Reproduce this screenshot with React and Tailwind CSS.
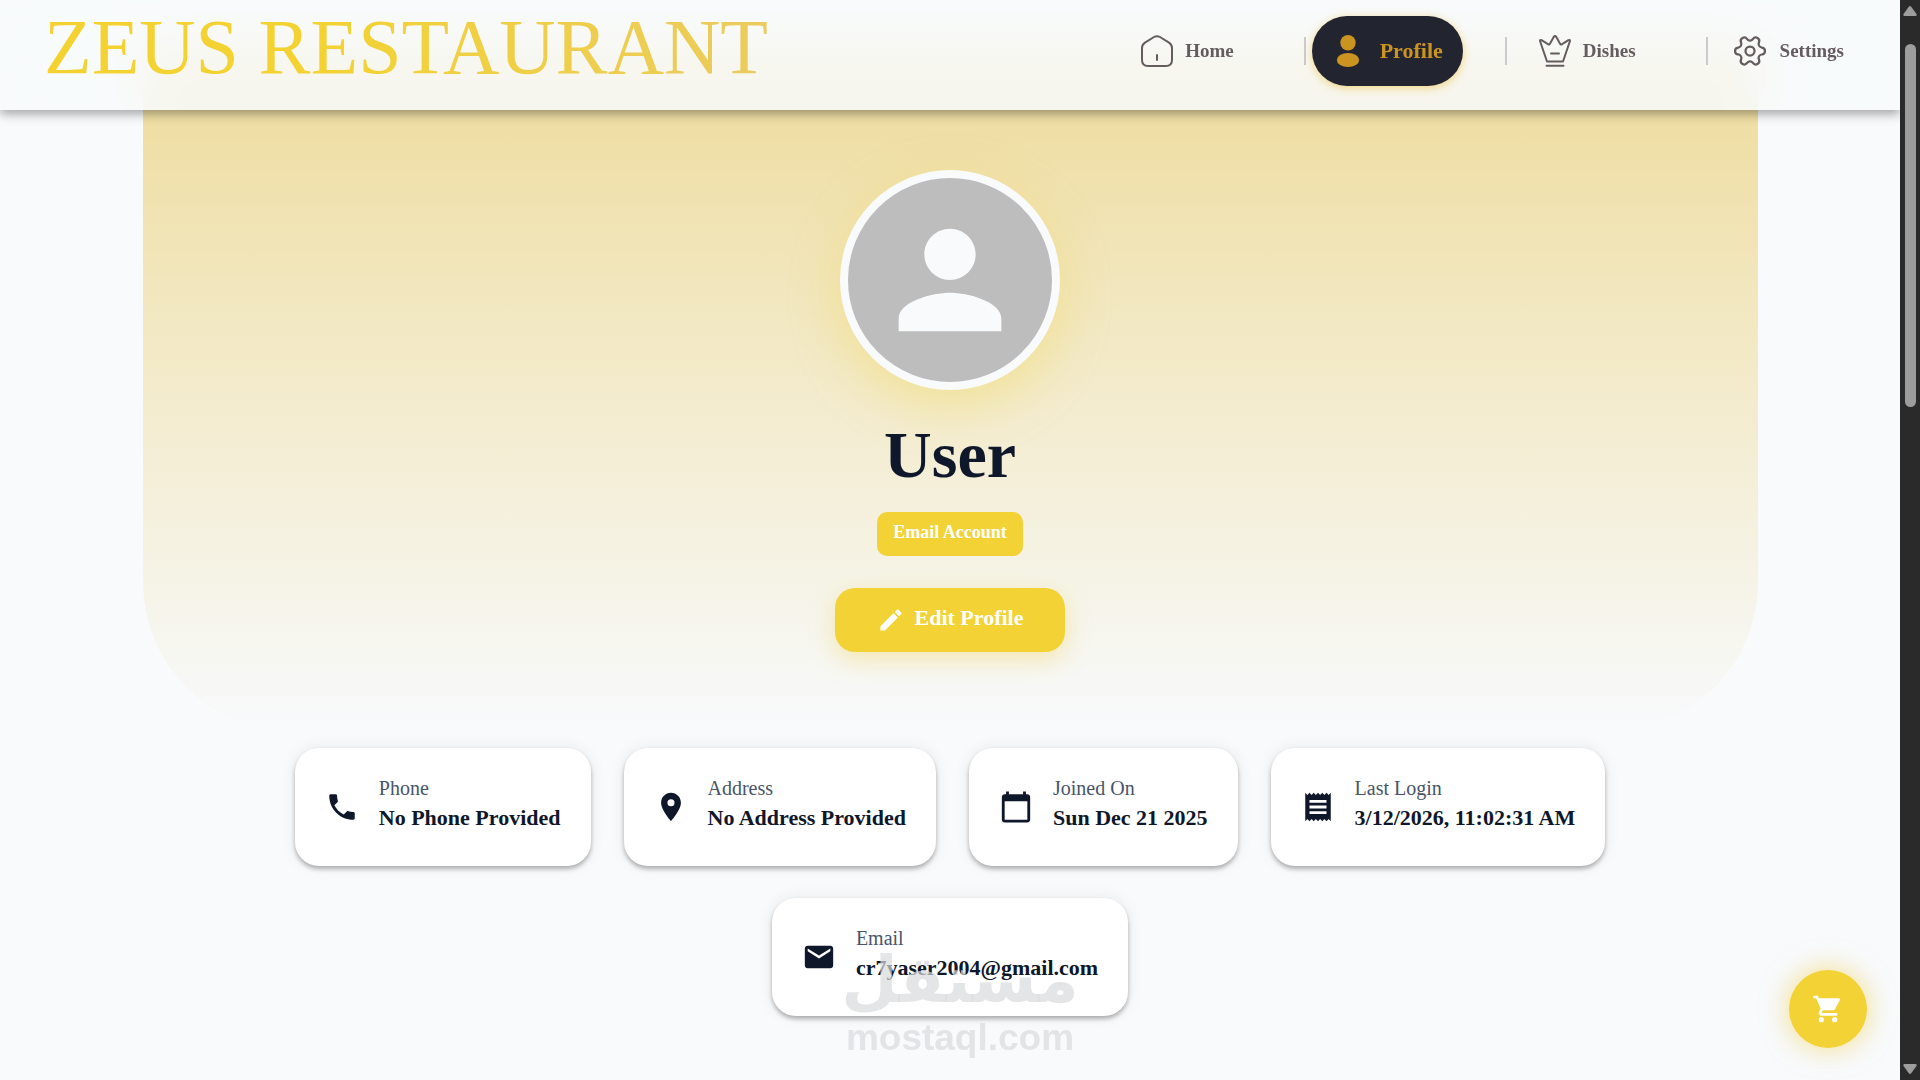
import React, { useEffect } from "react";
import {
    MdCalendarToday,
    MdEdit,
    MdEmail,
    MdLocationOn,
    MdPerson,
    MdPhone,
    MdReceipt,
    MdShoppingCart,
} from "react-icons/md";
import { Settings } from "lucide-react";

const user = {
    name: "User",
    account: "Email Account",
    details: [
        { label: "Phone", value: "No Phone Provided", icon: MdPhone },
        { label: "Address", value: "No Address Provided", icon: MdLocationOn },
        { label: "Joined On", value: "Sun Dec 21 2025", icon: MdCalendarToday },
        { label: "Last Login", value: "3/12/2026, 11:02:31 AM", icon: MdReceipt },
        { label: "Email", value: "cr7yaser2004@gmail.com", icon: MdEmail },
    ],
};

const HomeIcon = () => (
    <svg className="size-8" viewBox="0 0 32 32" fill="none" stroke="currentColor" strokeWidth="2" strokeLinecap="round" strokeLinejoin="round">
        <path d="M13 2 4 7.6Q1 9.600 1 13V25q0 6 6 6H25q6 0 6-6V13q0-3.400-3-5.400L19 2q-3-1.700-6 0Z" />
        <path d="M16 20v5" />
    </svg>
);

const UserIcon = () => (
    <svg className="size-8" viewBox="0 0 32 32" fill="currentColor">
        <circle cx="16" cy="7.700" r="7.700" />
        <ellipse cx="16" cy="25" rx="11.200" ry="7" />
    </svg>
);

const CrownIcon = () => (
    <svg className="size-8" viewBox="0 0 32 32" fill="none" stroke="currentColor" strokeWidth="2" strokeLinecap="round" strokeLinejoin="round">
        <path d="M2.600 5.200 9.300 9.400q1 .6 1.500-.5L14.700 2Q16-.2 17.300 2l3.900 6.900q.5 1.100 1.500.5l6.700-4.200q1.900-.8 1.500 1.100L24 26.500H8L1.100 6.300Q.7 4.400 2.600 5.200Z" />
        <path d="M12 18.500h8M7.500 30.800h17" />
    </svg>
);

const Divider = () => <span className="h-7 w-0.5 bg-[#c9cbcd]" />;

const NavLink = ({ href, icon, children }) => (
    <a href={href} className="flex items-center gap-3 text-[19px] font-bold text-[#655c60]">
        {icon}
        {children}
    </a>
);

const Header = () => (
    <header className="sticky top-0 z-20 flex h-[110px] items-center justify-between bg-[#f8fafc]/85 pr-14 pl-11 shadow-[0_4px_10px_rgba(0,0,0,0.35)] backdrop-blur-xl">
        <a href="/" className="bg-linear-to-r from-[#f3d232] from-40% to-[#ebcb5c] bg-clip-text pb-4 text-[78px] leading-[80px] text-transparent">
            ZEUS RESTAURANT
        </a>
        <nav className="flex items-center pb-2">
            <NavLink href="/home" icon={<HomeIcon />}>Home</NavLink>
            <div className="ml-[70px] flex items-center gap-1.5">
                <Divider />
                <a
                    href="/profile"
                    aria-current="page"
                    className="flex h-[70px] items-center gap-4 rounded-full bg-[#222530] px-5 text-[22px] font-bold text-[#cb9420] shadow-[0_2px_10px_rgba(235,190,60,0.6)]"
                >
                    <UserIcon />
                    <span className="pb-0.5">Profile</span>
                </a>
            </div>
            <div className="ml-[42px] flex items-center gap-8">
                <Divider />
                <NavLink href="/dishes" icon={<CrownIcon />}>Dishes</NavLink>
            </div>
            <div className="ml-[70px] flex items-center gap-6">
                <Divider />
                <NavLink href="/settings" icon={<Settings className="size-9 rotate-90" strokeWidth={1.5} />}>Settings</NavLink>
            </div>
        </nav>
    </header>
);

const Hero = () => (
    <section className="mx-auto -mt-[66px] flex w-[85%] flex-col items-center rounded-b-[150px] bg-linear-to-b from-[#eedb99] to-[#f8fafc] pt-[126px] pb-20">
        <div className="flex size-[220px] items-center justify-center rounded-full border-8 border-[#f8fafc] bg-[#bdbdbd] text-[#f8fafc] shadow-[0_16px_50px_rgba(242,209,54,0.35)]">
            <MdPerson className="size-[154px]" />
        </div>
        <h1 className="mt-7 text-[66px] leading-[74px] font-bold text-[#0f172a]">{user.name}</h1>
        <span className="mt-5 flex h-11 items-center rounded-[10px] bg-[#f3d236] px-4 pb-1 text-lg font-bold text-white">
            {user.account}
        </span>
        <button
            type="button"
            className="mt-8 flex h-16 items-center gap-2.5 rounded-[20px] bg-[#f3d236] px-[42px] text-[22px] font-bold text-white shadow-[0_8px_24px_rgba(242,200,54,0.35)]"
        >
            <MdEdit className="size-7" />
            <span className="pb-1.5">Edit Profile</span>
        </button>
    </section>
);

const InfoCard = ({ label, value, icon: Icon }) => (
    <div className="flex h-[118px] items-center gap-5 rounded-3xl bg-white px-[30px] text-[#0f172a] shadow-[0_3px_4px_rgba(0,0,0,0.28),0_0_16px_rgba(0,0,0,0.08)]">
        <Icon className="size-[34px]" />
        <dl className="pb-2">
            <dt className="text-xl leading-[30px] text-[#475569]">{label}</dt>
            <dd className="text-[22px] leading-[30px] font-bold">{value}</dd>
        </dl>
    </div>
);

const Watermark = () => (
    <div className="pointer-events-none fixed bottom-5 left-1/2 z-30 flex -translate-x-1/2 flex-col items-center font-bold text-[#d9dadb]/70">
        <span lang="ar" dir="rtl" className="font-['DejaVu_Sans',sans-serif] text-[65px] leading-[72px]">مستقل</span>
        <span className="font-['Liberation_Sans',sans-serif] text-[37px] leading-[44px]">mostaql.com</span>
    </div>
);

const Scrollbar = () => (
    <aside aria-hidden="true" className="sticky top-0 z-20 flex h-screen w-5 shrink-0 flex-col items-center justify-between bg-[#2a2a2a] py-1.5 text-[#9d9d9d]">
        <svg className="h-2.5 w-3.5" viewBox="0 0 14 10" fill="currentColor">
            <path d="M5.800.7q1.200-1.200 2.400 0L13.500 8q.6 2-1 2h-11q-1.600 0-1-2Z" />
        </svg>
        <div className="mt-7 mb-auto h-[34%] w-[11px] rounded-full bg-[#9d9d9d]" />
        <svg className="h-2.5 w-3.5 rotate-180" viewBox="0 0 14 10" fill="currentColor">
            <path d="M5.800.7q1.200-1.200 2.400 0L13.500 8q.6 2-1 2h-11q-1.600 0-1-2Z" />
        </svg>
    </aside>
);

const App = () => {
    useEffect(() => {
        document.title = "Profile | Zeus Restaurant";
    }, []);

    return (
        <div className="flex min-h-screen bg-[#f8fafc] font-['Liberation_Serif',serif]">
            <div className="min-w-0 flex-1">
                <Header />
                <main>
                    <Hero />
                    <section className="mx-auto mt-4 flex w-[85%] flex-wrap justify-center gap-x-[33px] gap-y-8 pb-16">
                        {user.details.map((item) => (
                            <InfoCard key={item.label} {...item} />
                        ))}
                    </section>
                </main>
            </div>
            <Scrollbar />

            <button
                type="button"
                aria-label="Open cart"
                className="fixed right-[53px] bottom-8 z-30 flex size-[78px] items-center justify-center rounded-full bg-[#f3d236] text-white shadow-[0_0_28px_rgba(242,200,54,0.6)]"
            >
                <MdShoppingCart className="size-8" />
            </button>
            <Watermark />
        </div>
    );
};

export default App;
